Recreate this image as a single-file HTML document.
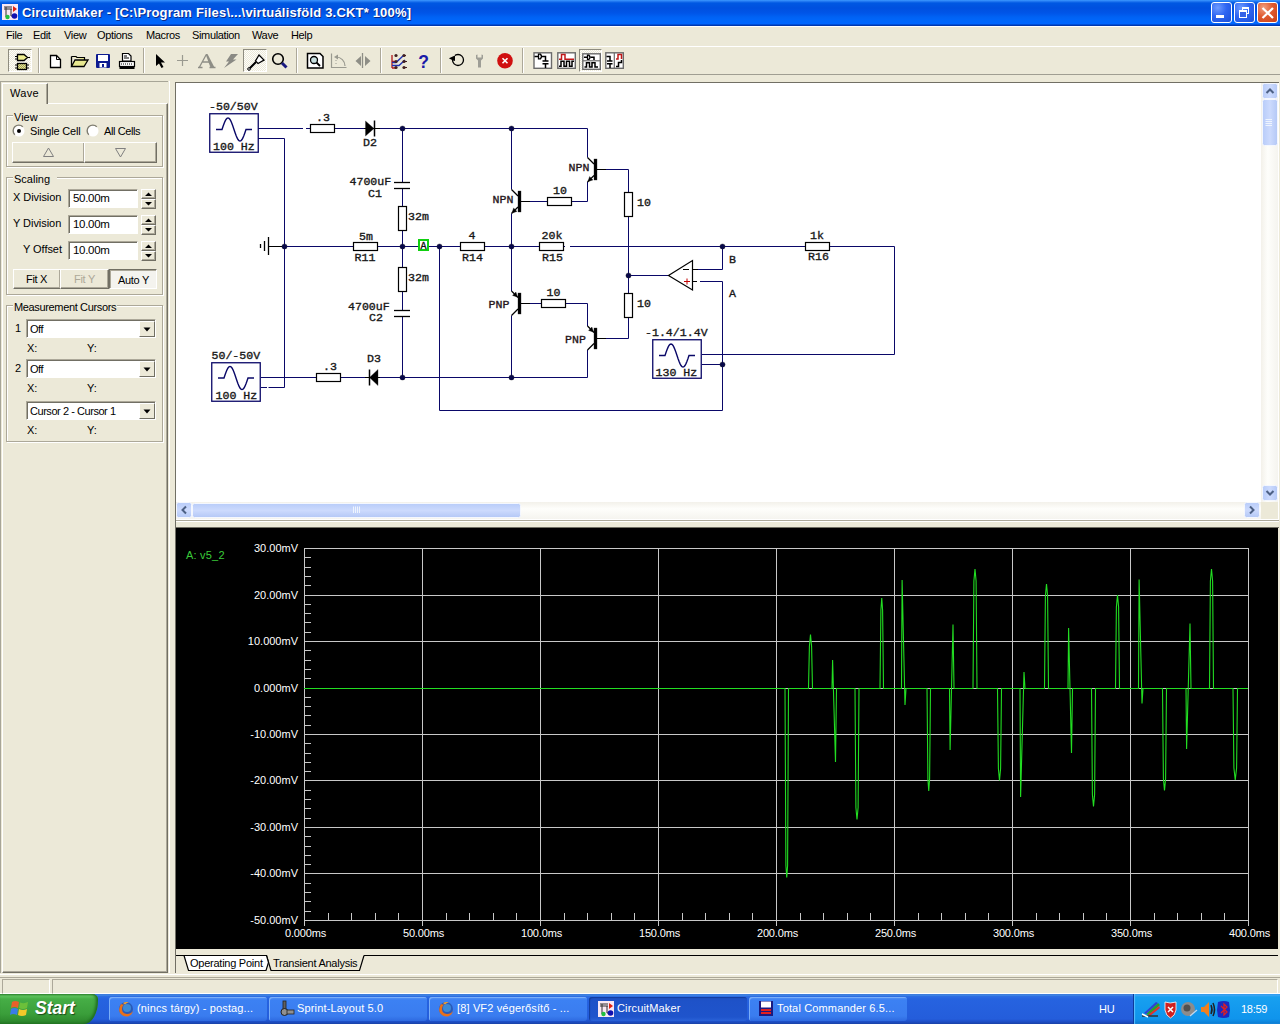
<!DOCTYPE html>
<html><head><meta charset="utf-8">
<style>
*{margin:0;padding:0;box-sizing:border-box}
html,body{width:1280px;height:1024px;overflow:hidden;background:#ECE9D8;font-family:"Liberation Sans",sans-serif;font-size:11px;color:#000;position:relative}
.a,div,span,svg{position:absolute}
#title{left:0;top:0;width:1280px;height:26px;background:linear-gradient(#3D9BFF 0px,#2A80F5 1px,#0058E2 3px,#0050DF 8px,#0055E8 13px,#0062F4 17px,#0066FA 20px,#0066FF 24px,#0038B0 25px,#0038B0 26px)}
#title .t{left:22px;top:5px;color:#fff;font-weight:bold;font-size:13px;letter-spacing:0.18px;white-space:nowrap;text-shadow:1px 1px 0 #0A2A8A}
.wb{top:2px;width:21px;height:21px;border:1px solid #fff;border-radius:3px;background:radial-gradient(circle at 30% 25%,#6E9BFF 0,#2F66F2 45%,#1A4FD8 100%)}
#menu{left:0;top:26px;width:1280px;height:20px;border-top:1px solid #fff}
#menu span{top:2px;font-size:11px;letter-spacing:-0.35px}
#tb{left:0;top:46px;width:1280px;height:29px;border-top:1px solid #fff;border-bottom:1px solid #A09E92}
.sep{top:48px;width:2px;height:25px;border-left:1px solid #ACA899;border-right:1px solid #fff}
.press{top:49px;height:23px;border:1px solid;border-color:#8E8C80 #fff #fff #8E8C80;background:repeating-conic-gradient(#FDFDFB 0 25%,#ECE9D8 0 50%) 0 0/2px 2px}
#statusbar{left:0;top:977px;width:1280px;height:17px;border-top:1px solid #ACA899;border-bottom:1px solid #fff}
#taskbar{left:0;top:994px;width:1280px;height:30px;background:linear-gradient(#3168D5 0px,#4993E6 1px,#2F6FE3 2px,#2663E0 5px,#245DDB 25px,#1C4CC3 28px,#1941A5 30px)}
.tk{top:997px;height:24px;width:158px;border-radius:3px;background:linear-gradient(#5A95F5,#3C81F3 3px,#3A7CEF 19px,#2E6AE0);color:#fff;font-size:11px;white-space:nowrap;overflow:hidden;box-shadow:inset 1px 1px 0 #7AAEF8}
.tk span{left:28px;top:5px;letter-spacing:0.15px}
.tk.act{background:linear-gradient(#1E4FC0,#1E52C8 4px,#1F54CC 20px,#2A62D8);box-shadow:inset 1px 1px 1px #123C9E}
#lp{left:0;top:81px;width:168px;height:892px;border-left:1px solid #A7A597;border-top:1px solid #A7A597}
.gb{border:1px solid #D0CEBF;box-shadow:inset 1px 1px 0 #fff,1px 1px 0 #fff}
.gb>.lbl{top:-8px;left:7px;background:#ECE9D8;padding:0 1px}
.btn{background:#ECE9D8;border:1px solid;border-color:#fff #716F64 #716F64 #fff;box-shadow:inset -1px -1px 0 #ACA899}
.edit{background:#fff;border:1px solid;border-color:#ACA899 #fff #fff #ACA899;box-shadow:inset 1px 1px 0 #716F64}
.combo{background:#fff;border:1px solid;border-color:#ACA899 #fff #fff #ACA899;box-shadow:inset 1px 1px 0 #716F64}
.combo .dd{right:1px;top:1px;width:17px;bottom:1px;background:#ECE9D8;border:1px solid;border-color:#fff #716F64 #716F64 #fff}
.combo .dd:after{content:"";position:absolute;left:4px;top:6px;border:4px solid transparent;border-top:4px solid #000;border-bottom:0}
#sch{left:175px;top:82px;width:1104px;height:438px;background:#fff;border-left:1px solid #716F64;border-top:1px solid #716F64}
#wave{left:176px;top:528px;width:1102px;height:421px;background:#000}
</style></head><body>
<div id="title">
  <svg style="left:2px;top:4px" width="16" height="16"><rect x="0" y="0" width="16" height="16" fill="#F8E8F4"/><path d="M2,3H10M2,5H10M4,3V13M9,5V12H12" stroke="#303030" stroke-width="1" fill="none"/><path d="M11,2L15,5L11,8Z" fill="#E02010"/><circle cx="12.5" cy="12" r="2.8" fill="#1010B0"/><circle cx="5.5" cy="13" r="2.2" fill="#20C040"/></svg>
  <div class="t">CircuitMaker - [C:\Program Files\...\virtuálisföld 3.CKT* 100%]</div>
  <div class="wb" style="left:1211px"><div style="left:4px;top:12px;width:8px;height:3px;background:#fff"></div></div>
  <div class="wb" style="left:1234px"><div style="left:7px;top:4px;width:7px;height:7px;border:1px solid #fff;border-top-width:2px"></div><div style="left:4px;top:7px;width:8px;height:8px;border:1px solid #fff;border-top-width:2px;background:#3463E8"></div></div>
  <div class="wb" style="left:1257px;background:radial-gradient(circle at 30% 25%,#F0A080 0,#E05A30 45%,#C84018 100%)"><svg style="left:3px;top:4px" width="14" height="12"><path d="M1.5,1L12,11M12,1L1.5,11" stroke="#fff" stroke-width="2.2"/></svg></div>
</div>
<div id="menu">
  <span style="left:6px">File</span><span style="left:33px">Edit</span><span style="left:64px">View</span><span style="left:97px">Options</span><span style="left:146px">Macros</span><span style="left:192px">Simulation</span><span style="left:252px">Wave</span><span style="left:291px">Help</span>
</div>
<div id="tb"></div>
<div class="sep" style="left:38px"></div><div class="sep" style="left:143px"></div><div class="sep" style="left:296px"></div><div class="sep" style="left:380px"></div><div class="sep" style="left:440px"></div><div class="sep" style="left:522px"></div>
<div class="press" style="left:8px;width:24px"></div><div class="press" style="left:243px;width:24px"></div><div class="press" style="left:579px;width:23px"></div>
<svg style="left:0;top:0" width="640" height="80">
<defs><pattern id="chk" width="2" height="2" patternUnits="userSpaceOnUse"><rect width="2" height="2" fill="#E8E890"/><rect width="1" height="1" fill="#A0A060"/><rect x="1" y="1" width="1" height="1" fill="#A0A060"/></pattern></defs>
<!-- gate/chip -->
<path d="M17.5,54.5H24L27.5,57.5L24,60.5H17.5Z" fill="#EDED90" stroke="#000" stroke-width="1.3"/>
<path d="M15,56.5H17.5M15,59H17.5M27.5,57.5H30" stroke="#000" stroke-width="1.2"/>
<rect x="17.5" y="63.5" width="9" height="6" fill="url(#chk)" stroke="#000" stroke-width="1.3"/>
<path d="M15,65H17.5M15,68H17.5M26.5,65H29M26.5,68H29" stroke="#000" stroke-width="1.2"/>
<!-- new -->
<path d="M50.5,55.5H56.5L60.5,59.5V67.5H50.5Z" fill="#fff" stroke="#000" stroke-width="1.3"/><path d="M56.5,55.5V59.5H60.5" fill="none" stroke="#000" stroke-width="1"/>
<!-- open -->
<path d="M71.5,56.5H76L77,57.5H84.5V60" fill="#E8E890" stroke="#000" stroke-width="1.2"/>
<path d="M71.5,66.5V56.5M71.5,66.5H84L88,60H75Z" fill="#E8E890" stroke="#000" stroke-width="1.3"/>
<!-- save -->
<rect x="96" y="54" width="14" height="14" fill="#0C1A90" rx="1"/><rect x="98" y="55" width="10" height="6" fill="#fff"/><rect x="99.5" y="63" width="7" height="4.5" fill="#fff"/><rect x="102" y="64" width="2" height="3" fill="#0C1A90"/>
<!-- print -->
<path d="M122.5,53.5H128.5L131,56V61H122.5Z" fill="#fff" stroke="#000" stroke-width="1.2"/><path d="M124,56H127M124,58H129" stroke="#000"/>
<rect x="119.5" y="61.5" width="15" height="5" fill="#fff" stroke="#000" stroke-width="1.2"/><rect x="119.5" y="67" width="15" height="2" fill="#000"/><path d="M121,64H133" stroke="#000" stroke-dasharray="1,1"/>
<!-- arrow -->
<path d="M156,54V66L159,63.5L161.5,68L163.5,67L161,62.5H165Z" fill="#000"/>
<!-- plus -->
<path d="M177,60.5H188M182.5,55V66" stroke="#9A9A90" stroke-width="1.2"/>
<path d="M206,55L199.5,67M202,62H210.5M198,67.5H202.5M209.5,67.5H215.5" fill="none" stroke="#8E8E86" stroke-width="1.3"/><path d="M205.5,54L207.5,54L214.5,67.5H210.5Z" fill="#8E8E86"/>
<!-- lightning -->
<path d="M231,54H238L233,59.5H236.5L224,68L229,61.5H226Z" fill="#8A8A84"/>
<!-- probe -->
<path d="M259,55L264,60L258,63.5L255.5,61Z" fill="#fff" stroke="#000" stroke-width="1.3"/><path d="M256,62L249.5,68.5" stroke="#000" stroke-width="2.2"/><circle cx="249" cy="69" r="1.3" fill="#fff" stroke="#000"/>
<!-- magnifier -->
<circle cx="278" cy="59" r="5.3" fill="none" stroke="#000" stroke-width="1.6"/><path d="M282,63L286.5,67.5" stroke="#1A1A80" stroke-width="3"/>
<!-- zoom page -->
<path d="M307.5,53.5H320L323,56.5V68H307.5Z" fill="#fff" stroke="#000" stroke-width="1.5"/><circle cx="314" cy="60" r="3.5" fill="#C8E0E0" stroke="#000" stroke-width="1.3"/><path d="M316.5,62.5L320,66" stroke="#000" stroke-width="1.8"/>
<!-- rotate gray -->
<path d="M331.5,53.5V67.5H346.5M336,57C341,57 345,61 345,66" fill="none" stroke="#9A9A90" stroke-width="1.2"/><path d="M334,57L338,54.5V59.5Z" fill="#9A9A90"/><path d="M336,60V66" stroke="#9A9A90" stroke-dasharray="1,2"/>
<!-- mirror -->
<path d="M361,56V66L355.5,61Z M365,56V66L370.5,61Z" fill="#8E8E86"/><path d="M362.5,53V68" stroke="#8E8E86" stroke-width="1.3"/>
<!-- netlist -->
<path d="M392,55V68M392,68H396M392,61.5H395" stroke="#B01818" stroke-width="1.3" fill="none"/>
<path d="M392,62.5L396,62.5L404,55M392,65.5H399L405,60" stroke="#2030B0" stroke-width="1.4" fill="none"/>
<circle cx="396" cy="55.5" r="1.6" fill="#402020"/><circle cx="404" cy="55.5" r="1.6" fill="#402020"/><circle cx="396" cy="61.5" r="1.6" fill="#402020"/><circle cx="404" cy="61.5" r="1.6" fill="#402020"/><circle cx="396" cy="67.5" r="1.6" fill="#402020"/><circle cx="404" cy="67.5" r="1.6" fill="#402020"/>
<path d="M404,61.5H407M404,67.5H407M404,55.5H406" stroke="#402020" stroke-width="1"/>
<text x="423.5" y="67.5" font-family="Liberation Sans" font-size="17.5" font-weight="bold" fill="#1A1AA8" text-anchor="middle">?</text>
<!-- undo -->
<circle cx="458" cy="60" r="5.5" fill="none" stroke="#000" stroke-width="1.3"/><path d="M449,58.5L454,55.5L454.5,61Z" fill="#000"/><rect x="450" y="55" width="5" height="3" fill="#ECE9D8"/><path d="M449.5,58L455,55.5V61Z" fill="#000"/>
<!-- wrench -->
<path d="M476,55V58.5L478,60.5V67.5H481V60.5L483,58.5V55L481.5,54.5V57.5H477.5V54.5Z" fill="#9E9E96"/>
<!-- stop -->
<circle cx="505" cy="60.8" r="7.8" fill="#D01010"/><path d="M502.5,58.3L507.5,63.3M507.5,58.3L502.5,63.3" stroke="#fff" stroke-width="1.6"/>
<!-- view icons -->
<g fill="none">
<rect x="534" y="52.8" width="17.5" height="15.5" fill="#fff" stroke="#6A6A6A" stroke-width="1.4"/>
<path d="M534.5,56.5H538.5M542,56.5H545.5V60.5M542.5,61H548.5M542.5,63.8H548.5M545.5,63.8V68" stroke="#000" stroke-width="1.5"/>
<path d="M538.5,54.2H540.5Q542.5,56.5 540.5,58.8H538.5Z" fill="#fff" stroke="#000" stroke-width="1.3"/>
<rect x="557.8" y="52.8" width="17.5" height="15.5" fill="#fff" stroke="#6A6A6A" stroke-width="1.4"/>
<path d="M559,59.3H561.5V54.5H565V59.3H574" stroke="#C01818" stroke-width="1.5"/>
<path d="M559,66.3H561V61.3H564V66.3H566.5V61.3H569.5V66.3H572V61.3H574" stroke="#000" stroke-width="1.5"/>
<rect x="582.8" y="53.8" width="17.5" height="15.5" fill="#fff" stroke="#6A6A6A" stroke-width="1.4"/>
<path d="M583,60.8H600" stroke="#6A6A6A" stroke-width="1.2"/>
<path d="M584,57.3H587.5M590.5,57.3H594V60" stroke="#000" stroke-width="1.5"/>
<path d="M587.5,55.2H589Q591,57.3 589,59.4H587.5Z" fill="#fff" stroke="#000" stroke-width="1.3"/>
<path d="M584.5,67.1H586.5V62.8H589.5V67.1H592V62.8H595V67.1H598" stroke="#000" stroke-width="1.5"/>
<rect x="605.8" y="52.8" width="17.5" height="15.5" fill="#fff" stroke="#6A6A6A" stroke-width="1.4"/>
<path d="M614.3,53V68" stroke="#6A6A6A" stroke-width="1.2"/>
<path d="M606.5,56.5H610V60.5M607,61H612.5M607,63.8H612.5M610,63.8V68" stroke="#000" stroke-width="1.5"/>
<path d="M616,59H618V54.5H621.5V59" stroke="#C01818" stroke-width="1.5"/>
<path d="M616,66.5H618.5V62.5H621.5V60" stroke="#000" stroke-width="1.5"/>
</g>
</svg>

<div id="lp"></div>
<div style="left:169px;top:81px;width:1px;height:892px;background:#fff"></div>
<div style="left:2px;top:103px;width:166px;height:870px;border-left:1px solid #fff;border-top:1px solid #fff;border-right:1px solid #716F64;border-bottom:1px solid #716F64;box-shadow:inset -1px -1px 0 #ACA899"></div>
<div style="left:2px;top:83px;width:46px;height:21px;background:#ECE9D8;border-left:1px solid #fff;border-top:1px solid #fff;border-right:1px solid #716F64;box-shadow:inset -1px 0 0 #ACA899"></div>
<span style="left:10px;top:87px;line-height:13px;white-space:nowrap;letter-spacing:0.3px">Wave</span>
<div style="left:6px;top:115px;width:157px;height:52px;border:1px solid #ACA899;box-shadow:inset 1px 1px 0 #fff,1px 1px 0 #fff"></div>
<div style="left:13px;top:112px;width:26px;height:6px;background:#ECE9D8"></div>
<span style="left:14px;top:111px;line-height:13px;white-space:nowrap;">View</span>
<svg style="left:11.5px;top:123.5px" width="14" height="14"><circle cx="7" cy="7" r="5.5" fill="#fff"/><path d="M2.8,10.8A5.5,5.5 0 0 1 10.8,2.8" stroke="#7E7C70" stroke-width="1.4" fill="none"/><circle cx="7" cy="7" r="2" fill="#000"/></svg>
<svg style="left:85.5px;top:123.5px" width="14" height="14"><circle cx="7" cy="7" r="5.5" fill="#fff"/><path d="M2.8,10.8A5.5,5.5 0 0 1 10.8,2.8" stroke="#7E7C70" stroke-width="1.4" fill="none"/></svg>
<span style="left:30px;top:125px;line-height:13px;white-space:nowrap;letter-spacing:-0.2px">Single Cell</span>
<span style="left:104px;top:125px;line-height:13px;white-space:nowrap;letter-spacing:-0.4px">All Cells</span>
<div style="left:12px;top:142px;width:73px;height:21px;border:1px solid;border-color:#fff #716F64 #716F64 #fff;box-shadow:inset -1px -1px 0 #ACA899"></div>
<div style="left:84px;top:142px;width:73px;height:21px;border:1px solid;border-color:#fff #716F64 #716F64 #fff;box-shadow:inset -1px -1px 0 #ACA899"></div>
<svg style="left:40px;top:145px" width="100" height="16"><path d="M3.5,11.5L8.5,3L13.5,11.5Z" fill="none" stroke="#808080"/><path d="M75.5,3.5L80.5,12L85.5,3.5Z" fill="none" stroke="#808080"/></svg>
<div style="left:6px;top:177px;width:157px;height:118px;border:1px solid #ACA899;box-shadow:inset 1px 1px 0 #fff,1px 1px 0 #fff"></div>
<div style="left:13px;top:174px;width:44px;height:6px;background:#ECE9D8"></div>
<span style="left:14px;top:173px;line-height:13px;white-space:nowrap;letter-spacing:0px">Scaling</span>
<span style="left:13px;top:191px;line-height:13px;white-space:nowrap;letter-spacing:-0.05px">X Division</span>
<div style="left:68px;top:189px;width:70px;height:19px;background:#fff;border:1px solid;border-color:#ACA899 #fff #fff #ACA899;box-shadow:inset 1px 1px 0 #716F64"></div>
<span style="left:73px;top:191.5px;line-height:13px;white-space:nowrap;letter-spacing:-0.3px;font-size:11.5px">50.00m</span>
<div style="left:141px;top:189px;width:15px;height:10px;border:1px solid;border-color:#fff #716F64 #716F64 #fff;box-shadow:inset -1px -1px 0 #ACA899"></div>
<div style="left:141px;top:199px;width:15px;height:10px;border:1px solid;border-color:#fff #716F64 #716F64 #fff;box-shadow:inset -1px -1px 0 #ACA899"></div>
<svg style="left:141px;top:189px" width="15" height="20"><path d="M4,7H11L7.5,3.5Z M4,13H11L7.5,16.5Z" fill="#000"/></svg>
<span style="left:13px;top:217px;line-height:13px;white-space:nowrap;letter-spacing:-0.05px">Y Division</span>
<div style="left:68px;top:215px;width:70px;height:19px;background:#fff;border:1px solid;border-color:#ACA899 #fff #fff #ACA899;box-shadow:inset 1px 1px 0 #716F64"></div>
<span style="left:73px;top:217.5px;line-height:13px;white-space:nowrap;letter-spacing:-0.3px;font-size:11.5px">10.00m</span>
<div style="left:141px;top:215px;width:15px;height:10px;border:1px solid;border-color:#fff #716F64 #716F64 #fff;box-shadow:inset -1px -1px 0 #ACA899"></div>
<div style="left:141px;top:225px;width:15px;height:10px;border:1px solid;border-color:#fff #716F64 #716F64 #fff;box-shadow:inset -1px -1px 0 #ACA899"></div>
<svg style="left:141px;top:215px" width="15" height="20"><path d="M4,7H11L7.5,3.5Z M4,13H11L7.5,16.5Z" fill="#000"/></svg>
<span style="left:23px;top:243px;line-height:13px;white-space:nowrap;letter-spacing:-0.05px">Y Offset</span>
<div style="left:68px;top:241px;width:70px;height:19px;background:#fff;border:1px solid;border-color:#ACA899 #fff #fff #ACA899;box-shadow:inset 1px 1px 0 #716F64"></div>
<span style="left:73px;top:243.5px;line-height:13px;white-space:nowrap;letter-spacing:-0.3px;font-size:11.5px">10.00m</span>
<div style="left:141px;top:241px;width:15px;height:10px;border:1px solid;border-color:#fff #716F64 #716F64 #fff;box-shadow:inset -1px -1px 0 #ACA899"></div>
<div style="left:141px;top:251px;width:15px;height:10px;border:1px solid;border-color:#fff #716F64 #716F64 #fff;box-shadow:inset -1px -1px 0 #ACA899"></div>
<svg style="left:141px;top:241px" width="15" height="20"><path d="M4,7H11L7.5,3.5Z M4,13H11L7.5,16.5Z" fill="#000"/></svg>
<div style="left:13px;top:269px;width:48px;height:20px;border:1px solid;border-color:#fff #716F64 #716F64 #fff;box-shadow:inset -1px -1px 0 #ACA899"></div>
<div style="left:60px;top:269px;width:49px;height:20px;border:1px solid;border-color:#fff #716F64 #716F64 #fff;box-shadow:inset -1px -1px 0 #ACA899"></div>
<div style="left:109px;top:269px;width:48px;height:20px;background:#F4F3EE;border:1px solid;border-color:#716F64 #fff #fff #716F64;box-shadow:inset 1px 1px 0 #ACA899"></div>
<span style="left:26px;top:273px;line-height:13px;white-space:nowrap;letter-spacing:-0.3px">Fit X</span>
<span style="left:74px;top:273px;line-height:13px;white-space:nowrap;letter-spacing:-0.3px;color:#ACA899">Fit Y</span>
<span style="left:118px;top:274px;line-height:13px;white-space:nowrap;letter-spacing:-0.3px">Auto Y</span>
<div style="left:6px;top:305px;width:157px;height:137px;border:1px solid #ACA899;box-shadow:inset 1px 1px 0 #fff,1px 1px 0 #fff"></div>
<div style="left:13px;top:302px;width:104px;height:6px;background:#ECE9D8"></div>
<span style="left:14px;top:301px;line-height:13px;white-space:nowrap;letter-spacing:-0.35px">Measurement Cursors</span>
<span style="left:15px;top:322px;line-height:13px;white-space:nowrap;">1</span>
<div style="left:26px;top:319px;width:130px;height:19px;background:#fff;border:1px solid;border-color:#ACA899 #fff #fff #ACA899;box-shadow:inset 1px 1px 0 #716F64"></div>
<div style="left:139px;top:321px;width:16px;height:16px;background:#ECE9D8;border:1px solid;border-color:#fff #716F64 #716F64 #fff"></div>
<svg style="left:139px;top:321px" width="16" height="16"><path d="M4.5,6.5H11.5L8,10.5Z" fill="#000"/></svg>
<span style="left:30px;top:323px;line-height:13px;white-space:nowrap;letter-spacing:-0.45px">Off</span>
<span style="left:27px;top:341.5px;line-height:13px;white-space:nowrap;">X:</span>
<span style="left:87px;top:341.5px;line-height:13px;white-space:nowrap;">Y:</span>
<span style="left:15px;top:362px;line-height:13px;white-space:nowrap;">2</span>
<div style="left:26px;top:359px;width:130px;height:19px;background:#fff;border:1px solid;border-color:#ACA899 #fff #fff #ACA899;box-shadow:inset 1px 1px 0 #716F64"></div>
<div style="left:139px;top:361px;width:16px;height:16px;background:#ECE9D8;border:1px solid;border-color:#fff #716F64 #716F64 #fff"></div>
<svg style="left:139px;top:361px" width="16" height="16"><path d="M4.5,6.5H11.5L8,10.5Z" fill="#000"/></svg>
<span style="left:30px;top:363px;line-height:13px;white-space:nowrap;letter-spacing:-0.45px">Off</span>
<span style="left:27px;top:382px;line-height:13px;white-space:nowrap;">X:</span>
<span style="left:87px;top:382px;line-height:13px;white-space:nowrap;">Y:</span>
<div style="left:26px;top:401px;width:130px;height:19px;background:#fff;border:1px solid;border-color:#ACA899 #fff #fff #ACA899;box-shadow:inset 1px 1px 0 #716F64"></div>
<div style="left:139px;top:403px;width:16px;height:16px;background:#ECE9D8;border:1px solid;border-color:#fff #716F64 #716F64 #fff"></div>
<svg style="left:139px;top:403px" width="16" height="16"><path d="M4.5,6.5H11.5L8,10.5Z" fill="#000"/></svg>
<span style="left:30px;top:405px;line-height:13px;white-space:nowrap;letter-spacing:-0.45px">Cursor 2 - Cursor 1</span>
<span style="left:27px;top:423.5px;line-height:13px;white-space:nowrap;">X:</span>
<span style="left:87px;top:423.5px;line-height:13px;white-space:nowrap;">Y:</span>
<div id="sch"><svg width="1102" height="420" style="left:0;top:0" font-family="Liberation Mono" font-size="11.6" stroke="#222" stroke-width="0.35"><g transform="translate(-176,-83)"><polyline points="258,128.5 303,128.5" fill="none" stroke="#0A0868" stroke-width="1"/>
<polyline points="306,128.5 310,128.5" fill="none" stroke="#0A0868" stroke-width="1"/>
<polyline points="335,128.5 364,128.5" fill="none" stroke="#0A0868" stroke-width="1"/>
<polyline points="380,128.5 587.5,128.5 587.5,157.5" fill="none" stroke="#0A0868" stroke-width="1"/>
<polyline points="258,138.5 284.5,138.5 284.5,246.5" fill="none" stroke="#0A0868" stroke-width="1"/>
<polyline points="268.5,246.5 353,246.5" fill="none" stroke="#0A0868" stroke-width="1"/>
<polyline points="378,246.5 418,246.5" fill="none" stroke="#0A0868" stroke-width="1"/>
<polyline points="429,246.5 460,246.5" fill="none" stroke="#0A0868" stroke-width="1"/>
<polyline points="485,246.5 539,246.5" fill="none" stroke="#0A0868" stroke-width="1"/>
<polyline points="564,246.5 565,246.5" fill="none" stroke="#0A0868" stroke-width="1"/>
<polyline points="570,246.5 805,246.5" fill="none" stroke="#0A0868" stroke-width="1"/>
<polyline points="830,246.5 894.5,246.5 894.5,354.5 702,354.5" fill="none" stroke="#0A0868" stroke-width="1"/>
<polyline points="402.5,128.5 402.5,182" fill="none" stroke="#0A0868" stroke-width="1"/>
<polyline points="402.5,189 402.5,206" fill="none" stroke="#0A0868" stroke-width="1"/>
<polyline points="402.5,231 402.5,267" fill="none" stroke="#0A0868" stroke-width="1"/>
<polyline points="402.5,292 402.5,310" fill="none" stroke="#0A0868" stroke-width="1"/>
<polyline points="402.5,317 402.5,377.5" fill="none" stroke="#0A0868" stroke-width="1"/>
<polyline points="261,377.5 316,377.5" fill="none" stroke="#0A0868" stroke-width="1"/>
<polyline points="341,377.5 369,377.5" fill="none" stroke="#0A0868" stroke-width="1"/>
<polyline points="377,377.5 587.5,377.5 587.5,350" fill="none" stroke="#0A0868" stroke-width="1"/>
<polyline points="261,387.5 267,387.5" fill="none" stroke="#0A0868" stroke-width="1"/>
<polyline points="268.5,387.5 284.5,387.5 284.5,246.5" fill="none" stroke="#0A0868" stroke-width="1"/>
<polyline points="439.5,246.5 439.5,410.5 722.5,410.5 722.5,281.5 700,281.5" fill="none" stroke="#0A0868" stroke-width="1"/>
<polyline points="511.5,128.5 511.5,189.5" fill="none" stroke="#0A0868" stroke-width="1"/>
<polyline points="511.5,213.5 511.5,291" fill="none" stroke="#0A0868" stroke-width="1"/>
<polyline points="511.5,315.5 511.5,377.5" fill="none" stroke="#0A0868" stroke-width="1"/>
<polyline points="521,201.5 547,201.5" fill="none" stroke="#0A0868" stroke-width="1"/>
<polyline points="572,201.5 587.5,201.5 587.5,182" fill="none" stroke="#0A0868" stroke-width="1"/>
<polyline points="597,169.5 628.5,169.5 628.5,192" fill="none" stroke="#0A0868" stroke-width="1"/>
<polyline points="628.5,217 628.5,293" fill="none" stroke="#0A0868" stroke-width="1"/>
<polyline points="628.5,318 628.5,338.5 597,338.5" fill="none" stroke="#0A0868" stroke-width="1"/>
<polyline points="521,303.5 541,303.5" fill="none" stroke="#0A0868" stroke-width="1"/>
<polyline points="566,303.5 587.5,303.5 587.5,326" fill="none" stroke="#0A0868" stroke-width="1"/>
<polyline points="628.5,275.5 668,275.5" fill="none" stroke="#0A0868" stroke-width="1"/>
<polyline points="692,269.5 722.5,269.5 722.5,246.5" fill="none" stroke="#0A0868" stroke-width="1"/>
<polyline points="702,364.5 722.5,364.5" fill="none" stroke="#0A0868" stroke-width="1"/>
<circle cx="402.5" cy="128.5" r="2.6" fill="#08084A"/>
<circle cx="511.5" cy="128.5" r="2.6" fill="#08084A"/>
<circle cx="284.5" cy="246.5" r="2.6" fill="#08084A"/>
<circle cx="402.5" cy="246.5" r="2.6" fill="#08084A"/>
<circle cx="439.5" cy="246.5" r="2.6" fill="#08084A"/>
<circle cx="511.5" cy="246.5" r="2.6" fill="#08084A"/>
<circle cx="722.5" cy="246.5" r="2.6" fill="#08084A"/>
<circle cx="628.5" cy="275.5" r="2.6" fill="#08084A"/>
<circle cx="402.5" cy="377.5" r="2.6" fill="#08084A"/>
<circle cx="511.5" cy="377.5" r="2.6" fill="#08084A"/>
<circle cx="722.5" cy="364.5" r="2.6" fill="#08084A"/>
<rect x="310.5" y="124.5" width="24" height="8" fill="#fff" stroke="#000" stroke-width="1.2"/>
<rect x="316.5" y="373.5" width="24" height="8" fill="#fff" stroke="#000" stroke-width="1.2"/>
<rect x="353.5" y="242.5" width="24" height="8" fill="#fff" stroke="#000" stroke-width="1.2"/>
<rect x="460.5" y="242.5" width="24" height="8" fill="#fff" stroke="#000" stroke-width="1.2"/>
<rect x="539.5" y="242.5" width="24" height="8" fill="#fff" stroke="#000" stroke-width="1.2"/>
<rect x="547.5" y="197.5" width="24" height="8" fill="#fff" stroke="#000" stroke-width="1.2"/>
<rect x="541.5" y="299.5" width="24" height="8" fill="#fff" stroke="#000" stroke-width="1.2"/>
<rect x="805.5" y="242.5" width="24" height="8" fill="#fff" stroke="#000" stroke-width="1.2"/>
<rect x="398.5" y="206.5" width="8" height="24" fill="#fff" stroke="#000" stroke-width="1.2"/>
<rect x="398.5" y="267.5" width="8" height="24" fill="#fff" stroke="#000" stroke-width="1.2"/>
<rect x="624.5" y="192.5" width="8" height="24" fill="#fff" stroke="#000" stroke-width="1.2"/>
<rect x="624.5" y="293.5" width="8" height="24" fill="#fff" stroke="#000" stroke-width="1.2"/>
<polyline points="394,182.5 410,182.5" fill="none" stroke="#000" stroke-width="1.3"/>
<polyline points="394,188.5 410,188.5" fill="none" stroke="#000" stroke-width="1.3"/>
<polyline points="394,310.5 410,310.5" fill="none" stroke="#000" stroke-width="1.3"/>
<polyline points="394,316.5 410,316.5" fill="none" stroke="#000" stroke-width="1.3"/>
<path d="M365.5,121 L374,128.5 L365.5,136 Z" fill="#000"/>
<polyline points="374.5,120.5 374.5,136.5" fill="none" stroke="#000" stroke-width="1.5"/>
<polyline points="364,128.5 380,128.5" fill="none" stroke="#000" stroke-width="1"/>
<path d="M378,369.5 L369.5,377.5 L378,385.5 Z" fill="#000"/>
<polyline points="369.5,369.5 369.5,385.5" fill="none" stroke="#000" stroke-width="1.5"/>
<polyline points="365,377.5 380,377.5" fill="none" stroke="#000" stroke-width="1"/>
<polyline points="268.5,237 268.5,255" fill="none" stroke="#000" stroke-width="1.3"/>
<polyline points="264.5,241 264.5,251" fill="none" stroke="#000" stroke-width="1.3"/>
<polyline points="260.5,244 260.5,248" fill="none" stroke="#000" stroke-width="1.3"/>
<polyline points="268.5,246.5 282,246.5" fill="none" stroke="#000" stroke-width="1"/>
<rect x="518" y="191" width="3" height="21" fill="#000"/>
<polyline points="521,201.5 530,201.5" fill="none" stroke="#000" stroke-width="1"/>
<polyline points="511.5,189.5 518,196.0" fill="none" stroke="#000" stroke-width="1.2"/>
<polyline points="518,207.0 511.5,213.5" fill="none" stroke="#000" stroke-width="1.2"/>
<path d="M511.8,213.2 L517.0,211.4 L513.6,208.0 Z" fill="#000"/>
<rect x="594" y="159" width="3" height="21" fill="#000"/>
<polyline points="597,169.5 606,169.5" fill="none" stroke="#000" stroke-width="1"/>
<polyline points="587.5,157.5 594,164.0" fill="none" stroke="#000" stroke-width="1.2"/>
<polyline points="594,175.5 587.5,182" fill="none" stroke="#000" stroke-width="1.2"/>
<path d="M587.8,181.7 L593.0,179.9 L589.6,176.5 Z" fill="#000"/>
<rect x="518" y="293" width="3" height="21" fill="#000"/>
<polyline points="521,303.5 530,303.5" fill="none" stroke="#000" stroke-width="1"/>
<polyline points="511.5,291 518,297.5" fill="none" stroke="#000" stroke-width="1.2"/>
<polyline points="518,309.0 511.5,315.5" fill="none" stroke="#000" stroke-width="1.2"/>
<path d="M517.7,297.2 L515.9,292.0 L512.5,295.4 Z" fill="#000"/>
<rect x="594" y="328" width="3" height="21" fill="#000"/>
<polyline points="597,338.5 606,338.5" fill="none" stroke="#000" stroke-width="1"/>
<polyline points="587.5,326 594,332.5" fill="none" stroke="#000" stroke-width="1.2"/>
<polyline points="594,343.5 587.5,350" fill="none" stroke="#000" stroke-width="1.2"/>
<path d="M593.7,332.2 L591.9,327.0 L588.5,330.4 Z" fill="#000"/>
<path d="M692.5,260.5 L692.5,290 L668.5,275.5 Z" fill="#fff" stroke="#000" stroke-width="1.2"/>
<polyline points="683,269.5 689,269.5" fill="none" stroke="#000" stroke-width="1"/>
<polyline points="684,281.5 690,281.5" fill="none" stroke="#C00000" stroke-width="1"/>
<polyline points="687,278.5 687,284.5" fill="none" stroke="#C00000" stroke-width="1"/>
<polyline points="692.5,269.5 698,269.5" fill="none" stroke="#000" stroke-width="1"/>
<polyline points="692.5,281.5 697,281.5" fill="none" stroke="#000" stroke-width="1"/>
<rect x="419" y="240" width="9" height="10" fill="#fff" stroke="#10D010" stroke-width="2"/>
<text x="423.5" y="249" font-size="10" text-anchor="middle" fill="#000" font-family="Liberation Mono">A</text>
<rect x="209.75" y="113.75" width="48.5" height="38.5" fill="none" stroke="#0A0868" stroke-width="1.3"/>
<path d="M216.0,129.5 L222.0,129.5 L222.0,129.5 L223.0,126.5 L224.0,123.7 L225.0,121.3 L226.0,119.5 L227.0,118.3 L228.0,117.9 L229.0,118.3 L230.0,119.5 L231.0,121.3 L232.0,123.7 L233.0,126.5 L234.0,129.5 L235.0,132.5 L236.0,135.3 L237.0,137.7 L238.0,139.5 L239.0,140.7 L240.0,141.1 L241.0,140.7 L242.0,139.5 L243.0,137.7 L244.0,135.3 L245.0,132.5 L246.0,129.5 L252.0,129.5" fill="none" stroke="#0A0868" stroke-width="1.4"/>
<text x="209" y="110" fill="#111" text-anchor="start" >-50/50V</text>
<text x="213" y="150" fill="#111" text-anchor="start" >100 Hz</text>
<rect x="211.75" y="362.75" width="48.5" height="38.5" fill="none" stroke="#0A0868" stroke-width="1.3"/>
<path d="M218.0,378.0 L224.0,378.0 L224.0,378.0 L225.0,375.0 L226.0,372.2 L227.0,369.8 L228.0,368.0 L229.0,366.8 L230.0,366.4 L231.0,366.8 L232.0,368.0 L233.0,369.8 L234.0,372.2 L235.0,375.0 L236.0,378.0 L237.0,381.0 L238.0,383.8 L239.0,386.2 L240.0,388.0 L241.0,389.2 L242.0,389.6 L243.0,389.2 L244.0,388.0 L245.0,386.2 L246.0,383.8 L247.0,381.0 L248.0,378.0 L254.0,378.0" fill="none" stroke="#0A0868" stroke-width="1.4"/>
<text x="211.5" y="358.6" fill="#111" text-anchor="start" >50/-50V</text>
<text x="215.5" y="399" fill="#111" text-anchor="start" >100 Hz</text>
<rect x="652.75" y="339.75" width="48.5" height="38.5" fill="none" stroke="#0A0868" stroke-width="1.3"/>
<path d="M659.0,355.5 L665.0,355.5 L665.0,355.5 L666.0,352.5 L667.0,349.8 L668.0,347.4 L669.0,345.5 L670.0,344.4 L671.0,344.0 L672.0,344.4 L673.0,345.5 L674.0,347.4 L675.0,349.8 L676.0,352.5 L677.0,355.5 L678.0,358.5 L679.0,361.2 L680.0,363.6 L681.0,365.5 L682.0,366.6 L683.0,367.0 L684.0,366.6 L685.0,365.5 L686.0,363.6 L687.0,361.2 L688.0,358.5 L689.0,355.5 L695.0,355.5" fill="none" stroke="#0A0868" stroke-width="1.4"/>
<text x="645" y="335.5" fill="#111" text-anchor="start" >-1.4/1.4V</text>
<text x="655.5" y="375.6" fill="#111" text-anchor="start" >130 Hz</text>
<text x="316" y="121" fill="#111" text-anchor="start" >.3</text>
<text x="323" y="370" fill="#111" text-anchor="start" >.3</text>
<text x="363" y="146" fill="#111" text-anchor="start" >D2</text>
<text x="367" y="361.7" fill="#111" text-anchor="start" >D3</text>
<text x="349.5" y="185" fill="#111" text-anchor="start" >4700uF</text>
<text x="368" y="197" fill="#111" text-anchor="start" >C1</text>
<text x="348" y="310" fill="#111" text-anchor="start" >4700uF</text>
<text x="369" y="321" fill="#111" text-anchor="start" >C2</text>
<text x="408" y="220" fill="#111" text-anchor="start" >32m</text>
<text x="408" y="281" fill="#111" text-anchor="start" >32m</text>
<text x="359" y="239.5" fill="#111" text-anchor="start" >5m</text>
<text x="354.5" y="261" fill="#111" text-anchor="start" >R11</text>
<text x="468.5" y="239" fill="#111" text-anchor="start" >4</text>
<text x="462" y="261" fill="#111" text-anchor="start" >R14</text>
<text x="541.5" y="239" fill="#111" text-anchor="start" >20k</text>
<text x="542" y="261" fill="#111" text-anchor="start" >R15</text>
<text x="553" y="194" fill="#111" text-anchor="start" >10</text>
<text x="546.5" y="296" fill="#111" text-anchor="start" >10</text>
<text x="637" y="205.5" fill="#111" text-anchor="start" >10</text>
<text x="637" y="306.6" fill="#111" text-anchor="start" >10</text>
<text x="810" y="239" fill="#111" text-anchor="start" >1k</text>
<text x="808" y="260" fill="#111" text-anchor="start" >R16</text>
<text x="729" y="262.5" fill="#111" text-anchor="start" >B</text>
<text x="729" y="297" fill="#111" text-anchor="start" >A</text>
<text x="492.5" y="203" fill="#2A0A14" text-anchor="start" >NPN</text>
<text x="568.5" y="171" fill="#2A0A14" text-anchor="start" >NPN</text>
<text x="488.5" y="308.2" fill="#2A0A14" text-anchor="start" >PNP</text>
<text x="565" y="342.8" fill="#2A0A14" text-anchor="start" >PNP</text></g></svg></div>
<div style="left:1261px;top:83px;width:17px;height:419px;background:linear-gradient(90deg,#F3F1EA,#FEFEFB 40%,#F5F4EF)"></div>
<div style="left:176px;top:502px;width:1085px;height:17px;background:linear-gradient(#F3F1EA,#FEFEFB 40%,#F5F4EF)"></div>
<div style="left:1261px;top:502px;width:17px;height:17px;background:#ECE9D8"></div>
<svg style="left:176px;top:83px" width="1102" height="437">
<defs><linearGradient id="sbv" x1="0" x2="1" y1="0" y2="0"><stop offset="0" stop-color="#B8CCF9"/><stop offset=".5" stop-color="#CCDAFD"/><stop offset="1" stop-color="#B4C8F6"/></linearGradient>
<linearGradient id="sbh" x1="0" x2="0" y1="0" y2="1"><stop offset="0" stop-color="#B8CCF9"/><stop offset=".5" stop-color="#CCDAFD"/><stop offset="1" stop-color="#B4C8F6"/></linearGradient></defs>
<g transform="translate(-176,-83)">
<rect x="1262.5" y="83.5" width="15" height="15" rx="2" fill="url(#sbv)" stroke="#F4F7FE"/>
<path d="M1266.5,93L1270,89.5L1273.5,93" fill="none" stroke="#4D6185" stroke-width="2"/>
<rect x="1262.5" y="99.5" width="15" height="46" rx="2" fill="url(#sbv)" stroke="#F4F7FE"/>
<path d="M1265.5,119.5H1272M1265.5,121.5H1272M1265.5,123.5H1272M1265.5,125.5H1272" stroke="#EEF4FE"/>
<rect x="1262.5" y="485.5" width="15" height="15" rx="2" fill="url(#sbv)" stroke="#F4F7FE"/>
<path d="M1266.5,491L1270,494.5L1273.5,491" fill="none" stroke="#4D6185" stroke-width="2"/>
<rect x="176.5" y="502.5" width="15" height="15" rx="2" fill="url(#sbh)" stroke="#F4F7FE"/>
<path d="M186,506.5L182.5,510L186,513.5" fill="none" stroke="#4D6185" stroke-width="2"/>
<rect x="192.5" y="503.5" width="328" height="14" rx="2" fill="url(#sbh)" stroke="#F4F7FE"/>
<path d="M353.5,506.5V513M355.5,506.5V513M357.5,506.5V513M359.5,506.5V513" stroke="#EEF4FE"/>
<rect x="1244.5" y="502.5" width="15" height="15" rx="2" fill="url(#sbh)" stroke="#F4F7FE"/>
<path d="M1250,506.5L1253.5,510L1250,513.5" fill="none" stroke="#4D6185" stroke-width="2"/>
</g></svg>

<div style="left:175px;top:520px;width:1104px;height:8px;border-top:1px solid #ACA899;border-bottom:1px solid #716F64;box-shadow:inset 0 1px 0 #fff"></div>
<div id="wave"><svg width="1102" height="421" style="left:0;top:0" font-family="Liberation Sans" font-size="11" fill="#fff"><g transform="translate(-176,-528)"><line x1="304.5" y1="548" x2="304.5" y2="926" stroke="#C8C8C8" stroke-width="1"/>
<line x1="422.5" y1="548" x2="422.5" y2="926" stroke="#C8C8C8" stroke-width="1"/>
<line x1="540.5" y1="548" x2="540.5" y2="926" stroke="#C8C8C8" stroke-width="1"/>
<line x1="658.5" y1="548" x2="658.5" y2="926" stroke="#C8C8C8" stroke-width="1"/>
<line x1="776.5" y1="548" x2="776.5" y2="926" stroke="#C8C8C8" stroke-width="1"/>
<line x1="894.5" y1="548" x2="894.5" y2="926" stroke="#C8C8C8" stroke-width="1"/>
<line x1="1012.5" y1="548" x2="1012.5" y2="926" stroke="#C8C8C8" stroke-width="1"/>
<line x1="1130.5" y1="548" x2="1130.5" y2="926" stroke="#C8C8C8" stroke-width="1"/>
<line x1="1248.5" y1="548" x2="1248.5" y2="926" stroke="#C8C8C8" stroke-width="1"/>
<line x1="304" y1="548.5" x2="1249" y2="548.5" stroke="#C8C8C8" stroke-width="1"/>
<line x1="304" y1="595.5" x2="1249" y2="595.5" stroke="#C8C8C8" stroke-width="1"/>
<line x1="304" y1="641.5" x2="1249" y2="641.5" stroke="#C8C8C8" stroke-width="1"/>
<line x1="304" y1="688.5" x2="1249" y2="688.5" stroke="#C8C8C8" stroke-width="1"/>
<line x1="304" y1="734.5" x2="1249" y2="734.5" stroke="#C8C8C8" stroke-width="1"/>
<line x1="304" y1="780.5" x2="1249" y2="780.5" stroke="#C8C8C8" stroke-width="1"/>
<line x1="304" y1="827.5" x2="1249" y2="827.5" stroke="#C8C8C8" stroke-width="1"/>
<line x1="304" y1="873.5" x2="1249" y2="873.5" stroke="#C8C8C8" stroke-width="1"/>
<line x1="304" y1="920.5" x2="1249" y2="920.5" stroke="#C8C8C8" stroke-width="1"/>
<path d="M304,557.5h7M304,567.5h7M304,576.5h7M304,585.5h7M304,604.5h7M304,613.5h7M304,622.5h7M304,632.5h7M304,650.5h7M304,660.5h7M304,669.5h7M304,678.5h7M304,697.5h7M304,706.5h7M304,715.5h7M304,725.5h7M304,743.5h7M304,753.5h7M304,762.5h7M304,771.5h7M304,790.5h7M304,799.5h7M304,808.5h7M304,818.5h7M304,836.5h7M304,846.5h7M304,855.5h7M304,864.5h7M304,883.5h7M304,892.5h7M304,901.5h7M304,911.5h7M328.5,920v-7M351.5,920v-7M375.5,920v-7M398.5,920v-7M446.5,920v-7M469.5,920v-7M493.5,920v-7M516.5,920v-7M564.5,920v-7M587.5,920v-7M611.5,920v-7M634.5,920v-7M682.5,920v-7M705.5,920v-7M729.5,920v-7M752.5,920v-7M800.5,920v-7M823.5,920v-7M847.5,920v-7M870.5,920v-7M918.5,920v-7M941.5,920v-7M965.5,920v-7M988.5,920v-7M1036.5,920v-7M1059.5,920v-7M1083.5,920v-7M1106.5,920v-7M1154.5,920v-7M1177.5,920v-7M1201.5,920v-7M1224.5,920v-7" stroke="#C8C8C8" stroke-width="1" fill="none"/>
<text x="298" y="552" text-anchor="end">30.00mV</text>
<text x="298" y="599" text-anchor="end">20.00mV</text>
<text x="298" y="645" text-anchor="end">10.000mV</text>
<text x="298" y="692" text-anchor="end">0.000mV</text>
<text x="298" y="738" text-anchor="end">-10.00mV</text>
<text x="298" y="784" text-anchor="end">-20.00mV</text>
<text x="298" y="831" text-anchor="end">-30.00mV</text>
<text x="298" y="877" text-anchor="end">-40.00mV</text>
<text x="298" y="924" text-anchor="end">-50.00mV</text>
<text x="305.5" y="937" text-anchor="middle" letter-spacing="-0.15">0.000ms</text>
<text x="423.5" y="937" text-anchor="middle" letter-spacing="-0.15">50.00ms</text>
<text x="541.5" y="937" text-anchor="middle" letter-spacing="-0.15">100.0ms</text>
<text x="659.5" y="937" text-anchor="middle" letter-spacing="-0.15">150.0ms</text>
<text x="777.5" y="937" text-anchor="middle" letter-spacing="-0.15">200.0ms</text>
<text x="895.5" y="937" text-anchor="middle" letter-spacing="-0.15">250.0ms</text>
<text x="1013.5" y="937" text-anchor="middle" letter-spacing="-0.15">300.0ms</text>
<text x="1131.5" y="937" text-anchor="middle" letter-spacing="-0.15">350.0ms</text>
<text x="1249.5" y="937" text-anchor="middle" letter-spacing="-0.15">400.0ms</text>
<polyline points="304,688.5 785,688.5 785.9,865.5 786.75,877.5 787.6,865.5 788.5,688.5 808.5,688.5 809.4,646.5 810.5,634.5 811.6,646.5 812.5,688.5 832,688.5 832.6,660 835.5,762 836.5,688.5 855,688.5 855.9,807.5 857.0,819.5 858.1,807.5 859,688.5 880,688.5 880.9,610 881.75,598 882.6,610 883.5,688.5 901.5,688.5 902.1,580 905,705 906,688.5 927,688.5 927.9,779 928.75,791 929.6,779 930.5,688.5 949.5,688.5 950.1,750 953,624.5 954,688.5 973,688.5 973.9,581 975.0,569 976.1,581 977,688.5 997.5,688.5 998.4,768.5 999.5,780.5 1000.6,768.5 1001.5,688.5 1020,688.5 1020.6,797 1024,672 1025,688.5 1044.5,688.5 1045.4,596 1046.5,584 1047.6,596 1048.5,688.5 1068,688.5 1068.6,628 1071.5,753 1072.5,688.5 1091.5,688.5 1092.4,794.5 1093.5,806.5 1094.6,794.5 1095.5,688.5 1115.5,688.5 1116.4,607 1117.5,595 1118.6,607 1119.5,688.5 1138.5,688.5 1139.1,579.5 1142,703.5 1143,688.5 1162.5,688.5 1163.4,778.5 1164.5,790.5 1165.6,778.5 1166.5,688.5 1186,688.5 1186.6,749 1190,623.5 1191,688.5 1209.5,688.5 1210.4,581 1211.5,569 1212.6,581 1213.5,688.5 1233,688.5 1233.9,768 1235.25,780 1236.6,768 1237.5,688.5 1248,688.5" fill="none" stroke="#22DD22" stroke-width="1.1"/>
<text x="186" y="559" fill="#3ACC3A" letter-spacing="0.2">A: v5_2</text></g></svg></div>
<svg style="left:176px;top:949px" width="1102" height="24"><g transform="translate(-176,-949)">
<path d="M176,955.5H184M364,955.5H1278" stroke="#000" stroke-width="1"/>
<path d="M266.5,955.5L271,970.5H359.5L364,955.5" fill="#ECE9D8" stroke="#000" stroke-width="1.2"/>
<path d="M184,955.5L188.5,970.5H266L268.5,962.5L266.5,955.5Z" fill="#fff" stroke="#000" stroke-width="1.2"/>

</g></svg>
<span style="left:190px;top:957px;line-height:13px;font-size:11px;letter-spacing:-0.25px">Operating Point</span>
<span style="left:273px;top:957px;line-height:13px;font-size:11px;letter-spacing:-0.25px">Transient Analysis</span>

<div style="left:175px;top:520px;width:1px;height:453px;background:#716F64"></div>
<div style="left:0;top:974px;width:1280px;height:1px;background:#fff"></div>
<div id="statusbar"><div style="left:2px;top:1px;width:48px;height:15px;border:1px solid;border-color:#ACA899 #fff #fff #ACA899"></div><div style="left:52px;top:1px;width:1226px;height:15px;border:1px solid;border-color:#ACA899 #fff #fff #ACA899"></div></div>
<div id="taskbar"><div style="left:0;top:0;width:98px;height:30px;border-top-right-radius:6px 5px;border-bottom-right-radius:14px 24px;background:linear-gradient(#3C9A3C 0,#5EC45E 2px,#46AE46 5px,#3A9E3A 20px,#2E8A2E 27px,#267A26 30px);box-shadow:inset -2px 0 3px #1E6A1E"></div>
<svg style="left:10px;top:5px" width="20" height="20"><path d="M2,3Q5,1 9,3L8,9Q4,7 1,9Z" fill="#E8602A"/><path d="M10,3.5Q14,5 18,3L17,9Q13,11 9,9Z" fill="#6CC03A"/><path d="M1,10Q4,8 8,10L7,16Q3,14 0,16Z" fill="#3A7CE8"/><path d="M9,10Q13,12 17,10L16,16Q12,18 8,16Z" fill="#F4C82A"/></svg>
<span style="left:35px;top:3px;font-size:17.5px;font-weight:bold;font-style:italic;color:#fff;line-height:22px;text-shadow:1px 1px 1px #1A4A1A">Start</span>
<div class="tk" style="left:109px;top:3px"><svg style="left:9px;top:4px" width="16" height="16"><circle cx="8" cy="8" r="7" fill="#2A5AB8"/><circle cx="9" cy="7" r="4" fill="#3A8AD8"/><path d="M3,3Q0,8 2,12Q5,16 10,15.5Q14,14 15,10Q13,13 9,13Q4,12.5 4,8Q4,5 6,3.5Q4,3.5 3,3Z" fill="#E8701A"/><path d="M5,2Q8,0.5 11,1.5Q8,2 7,3.5Z" fill="#F0A030"/></svg><span>(nincs tárgy) - postag...</span></div>
<div class="tk" style="left:269px;top:3px"><svg style="left:9px;top:3px" width="18" height="18"><rect x="5" y="1" width="3" height="8" fill="#606060" stroke="#222" stroke-width=".8"/><circle cx="6.5" cy="12" r="3.5" fill="#909090" stroke="#222"/><rect x="9" y="10" width="7" height="4" fill="#909090" stroke="#222" stroke-width=".8"/></svg><span>Sprint-Layout 5.0</span></div>
<div class="tk" style="left:429px;top:3px"><svg style="left:9px;top:4px" width="16" height="16"><circle cx="8" cy="8" r="7" fill="#2A5AB8"/><circle cx="9" cy="7" r="4" fill="#3A8AD8"/><path d="M3,3Q0,8 2,12Q5,16 10,15.5Q14,14 15,10Q13,13 9,13Q4,12.5 4,8Q4,5 6,3.5Q4,3.5 3,3Z" fill="#E8701A"/><path d="M5,2Q8,0.5 11,1.5Q8,2 7,3.5Z" fill="#F0A030"/></svg><span>[8] VF2 végerősítő - ...</span></div>
<div class="tk act" style="left:589px;top:3px"><svg style="left:9px;top:4px" width="16" height="16"><rect x="0" y="0" width="16" height="16" fill="#F8E8F4"/><path d="M2,3H10M2,5H10M4,3V13M9,5V12H12" stroke="#303030" stroke-width="1" fill="none"/><path d="M11,2L15,5L11,8Z" fill="#E02010"/><circle cx="12.5" cy="12" r="2.8" fill="#1010B0"/><circle cx="5.5" cy="13" r="2.2" fill="#20C040"/></svg><span>CircuitMaker</span></div>
<div class="tk" style="left:749px;top:3px"><svg style="left:9px;top:3px" width="16" height="17"><rect x="1" y="1" width="14" height="15" fill="#1A1A80"/><rect x="3" y="1.5" width="10" height="6" fill="#fff"/><rect x="3" y="9" width="10" height="2" fill="#E02020"/><rect x="3" y="12" width="10" height="2" fill="#E02020"/></svg><span>Total Commander 6.5...</span></div>
<span style="left:1099px;top:9px;color:#fff;font-size:11px;line-height:13px;letter-spacing:-0.3px">HU</span>
<div style="left:1133px;top:0;width:147px;height:30px;background:linear-gradient(#1C8AE8 0,#40A8F5 1px,#18A0F0 3px,#0F94EC 25px,#0C7AD0 30px);border-left:1px solid #0E3A9A;box-shadow:inset 1px 0 1px #5AC0FF"></div>
<svg style="left:1140px;top:6px" width="95" height="20">
<path d="M6,14L18,3L20,5L9,15Z" fill="#2AA02A"/><path d="M8,15L19,6L20,8L10,16Z" fill="#E03030"/><path d="M4,13L16,2L18,3L6,14Z" fill="#3040D0"/><path d="M2,16H18" stroke="#303030" stroke-width="1.5"/><path d="M2,14L8,17" stroke="#fff" stroke-width="1.5"/>
<path d="M25,2Q30,4 36,2V10Q35,16 30.5,18Q26,16 25,10Z" fill="#D02020" stroke="#fff" stroke-width=".8"/><path d="M28,7L33,12M33,7L28,12" stroke="#fff" stroke-width="1.5"/>
<circle cx="48" cy="9" r="7" fill="#8C8C8C"/><circle cx="47" cy="8" r="3.5" fill="#505050"/><path d="M50,16L57,10" stroke="#C0D8F0" stroke-width="1.2"/>
<path d="M61,7H64L69,2V17L64,12H61Z" fill="#F08020"/><path d="M71,5Q73,9.5 71,14M73,3Q76,9.5 73,16" stroke="#202020" stroke-width="1.5" fill="none"/>
<path d="M78,2Q84,0 89,2L90,10L89,17Q84,19 78,17L77,10Z" fill="#1A2AC0"/><path d="M81,6L87,12L84,15V4L87,7L81,13" stroke="#E02020" stroke-width="1.3" fill="none"/>
</svg>
<span style="left:1241px;top:9px;color:#fff;font-size:11px;line-height:13px;letter-spacing:-0.3px">18:59</span>
</div>
</body></html>
